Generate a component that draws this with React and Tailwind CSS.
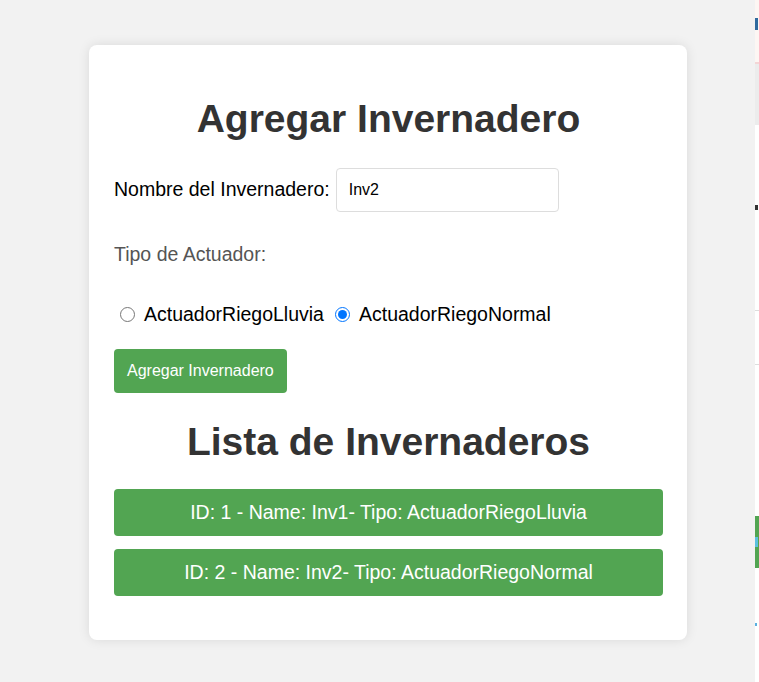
import React, { useState } from "react";

const invernaderos = [
  { id: 1, name: "Inv1", tipo: "ActuadorRiegoLluvia" },
  { id: 2, name: "Inv2", tipo: "ActuadorRiegoNormal" },
];

const SideStrip = () => (
  <div className="w-[4px] h-[682px] bg-white flex flex-col shrink-0">
    <div className="h-[62px] bg-[#fdf6f3] flex flex-col pt-[18px]">
      <div className="h-[12px] w-[3px] bg-[#2f6a9e]" />
    </div>
    <div className="h-[2px] bg-[#f3d6d6]" />
    <div className="h-[61px] bg-[#ececec]" />
    <div className="h-[80px]" />
    <div className="h-[5px] w-[3px] bg-[#333]" />
    <div className="h-[100px]" />
    <div className="h-px bg-[#ddd]" />
    <div className="h-[53px]" />
    <div className="h-px bg-[#ddd]" />
    <div className="h-[151px]" />
    <div className="h-[52px] bg-[#52a552] flex items-center">
      <div className="h-[10px] w-[3px] bg-[#5bc0de]" />
    </div>
    <div className="h-[55px]" />
    <div className="h-[3px] w-[2px] bg-[#5ab0e0]" />
  </div>
);

export default function App() {
  const [nombre, setNombre] = useState("Inv2");
  const [tipo, setTipo] = useState("ActuadorRiegoNormal");

  return (
    <div className="flex w-[759px] h-[682px] bg-[#f2f2f2] font-['Liberation_Sans',Arial,sans-serif] overflow-hidden">
      <div className="flex-1 pt-[45px] pl-[89px]">
        <div className="w-[598px] bg-white rounded-lg shadow-[0_0_12px_rgba(0,0,0,0.1)] pl-[25px] pr-[24px] pt-[51px] pb-[44px]">
          <h1 className="text-[39px] leading-[45px] font-bold text-[#333] text-center">
            Agregar Invernadero
          </h1>

          <div className="flex items-center mt-[27px] text-[19.5px] text-black">
            <label className="mr-[6px]">Nombre del Invernadero:</label>
            <input
              type="text"
              value={nombre}
              onChange={(e) => setNombre(e.target.value)}
              className="w-[223px] h-[44px] border border-[#ddd] rounded px-[12px] text-[16px] text-black outline-none"
            />
          </div>

          <p className="mt-[31px] text-[19.5px] leading-[23px] text-[#555]">Tipo de Actuador:</p>

          <div className="flex items-center mt-[37px] text-[19.5px] leading-[23px] text-black">
            <input
              type="radio"
              name="tipo"
              checked={tipo === "ActuadorRiegoLluvia"}
              onChange={() => setTipo("ActuadorRiegoLluvia")}
              className="w-[15px] h-[15px] m-0 ml-[6px] mr-[9px]"
            />
            <span>ActuadorRiegoLluvia</span>
            <input
              type="radio"
              name="tipo"
              checked={tipo === "ActuadorRiegoNormal"}
              onChange={() => setTipo("ActuadorRiegoNormal")}
              className="w-[15px] h-[15px] m-0 ml-[11px] mr-[9px]"
            />
            <span>ActuadorRiegoNormal</span>
          </div>

          <button className="mt-[23px] h-[44px] px-[13px] bg-[#52a552] text-white text-[16px] rounded">
            Agregar Invernadero
          </button>

          <h2 className="mt-[26px] text-[39px] leading-[45px] font-bold text-[#333] text-center">
            Lista de Invernaderos
          </h2>

          <ul className="mt-[25px] flex flex-col gap-[13px]">
            {invernaderos.map((inv) => (
              <li
                key={inv.id}
                className="h-[47px] flex items-center justify-center bg-[#52a552] text-white text-[19.5px] rounded"
              >
                ID: {inv.id} - Name: {inv.name}- Tipo: {inv.tipo}
              </li>
            ))}
          </ul>
        </div>
      </div>
      <SideStrip />
    </div>
  );
}
